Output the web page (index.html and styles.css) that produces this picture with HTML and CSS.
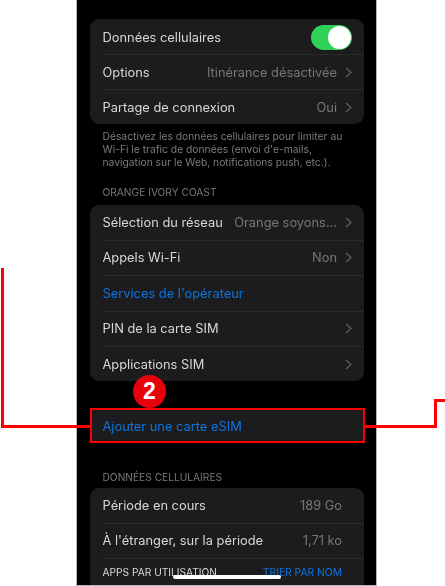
FILE: index.html
```html
<!doctype html>
<html>
<head>
<meta charset="utf-8">
<title>Données cellulaires</title>
<link rel="stylesheet" href="styles.css">
</head>

<body>
	<div class="phone">
		<ul class="group first">
			<li><span>Données cellulaires</span><i class="toggle"></i></li>
			<li><span>Options</span><em>Itinérance désactivée</em><svg class="chev" viewBox="0 0 7 11"><path d="M1 1l5 4.5-5 4.5"/></svg></li>
			<li><span>Partage de connexion</span><em>Oui</em><svg class="chev" viewBox="0 0 7 11"><path d="M1 1l5 4.5-5 4.5"/></svg></li>
		</ul>
		<p class="note">Désactivez les données cellulaires pour limiter au Wi-Fi le trafic de données (envoi d'e-mails, navigation sur le Web, notifications push, etc.).</p>
		<h4 class="title">ORANGE IVORY COAST</h4>
		<ul class="group">
			<li><span>Sélection du réseau</span><em>Orange soyons...</em><svg class="chev" viewBox="0 0 7 11"><path d="M1 1l5 4.5-5 4.5"/></svg></li>
			<li><span>Appels Wi-Fi</span><em>Non</em><svg class="chev" viewBox="0 0 7 11"><path d="M1 1l5 4.5-5 4.5"/></svg></li>
			<li class="low"><span class="link">Services de l'opérateur</span></li>
			<li class="low"><span>PIN de la carte SIM</span><svg class="chev" viewBox="0 0 7 11"><path d="M1 1l5 4.5-5 4.5"/></svg></li>
			<li class="lower"><span>Applications SIM</span><svg class="chev" viewBox="0 0 7 11"><path d="M1 1l5 4.5-5 4.5"/></svg></li>
		</ul>
		<div class="esim"><span class="link">Ajouter une carte eSIM</span></div>
		<h4 class="title usage">DONNÉES CELLULAIRES</h4>
		<ul class="group last">
			<li><span>Période en cours</span><em class="plain">189 Go</em></li>
			<li><span>À l'étranger, sur la période</span><em class="plain">1,71 ko</em></li>
			<li class="apps"><span>APPS PAR UTILISATION</span><b>TRIER PAR NOM</b></li>
		</ul>
		<div class="home"></div>
	</div>
	<div class="badge">2</div>
	<div class="line left-v"></div>
	<div class="line left-h"></div>
	<div class="line right-h"></div>
	<div class="line right-v"></div>
	<div class="line right-t"></div>
</body>
</html>
```

FILE: styles.css
```css
*{ margin:0; padding:0; list-style:none; box-sizing:border-box; }
html,body{ height:586px; overflow:hidden; }
body{ position:relative; background:#fff; font-family:"Inter","Liberation Sans",sans-serif; }
.phone{ position:relative; width:301px; height:586px; margin-left:76px; background:#000; padding:19px 12px 0 13px; border:1px solid #b5b5b5; border-width:0 1px 1px 1px; overflow:hidden; filter:blur(.45px); }
.group{ background:#1c1c1e; border-radius:9px; overflow:hidden; }
.group li{ display:flex; align-items:center; height:35.1px; padding-right:12px; margin-left:12.5px; border-top:1px solid #2a2a2c; font-size:12.85px; color:#d8d8da; }
.group li:first-child{ border-top:0; padding-top:1px; }
.title + .group li{ padding-bottom:1px; }
.title + .group li.low{ padding-bottom:0; }
.title + .group li.lower{ padding-bottom:0; padding-top:2px; }
.group span{ flex:1; white-space:nowrap; }
.group em{ font-style:normal; color:#77777b; white-space:nowrap; }
.group .link{ color:#0b74e2; }
.chev{ width:7px; height:11px; margin-left:8px; fill:none; stroke:#5c5c60; stroke-width:1.4; }
.toggle{ position:relative; display:block; width:41px; height:25px; border-radius:13px; background:#30d158; }
.toggle:after{ content:""; position:absolute; right:1px; top:1px; width:23px; height:23px; border-radius:50%; background:#fff; }
.note{ margin:6px 19px 0 12.5px; font-size:10.3px; line-height:13px; color:#7b7b7f; }
.title{ margin:17px 0 0 12.5px; font-size:10.2px; line-height:13px; font-weight:normal; color:#77777b; }
.title + .group{ margin-top:6px; }
.esim{ margin:27.5px -1px 0 0; height:35px; padding:2px 0 0 10.5px; background:#1c1c1e; border:2.5px solid #ff0000; display:flex; align-items:center; font-size:12.85px; }
.link{ color:#0b74e2; }
.title.usage{ margin-top:27.5px; }
.title.usage + .group{ margin-top:4.5px; }
.group.last{ border-radius:9px 9px 0 0; height:120px; }
.group .apps{ height:28px; padding-right:22px; font-size:10.2px; }
.group em.plain{ margin-right:10px; }
.apps b{ font-weight:normal; color:#0b74e2; font-size:10.3px; }
.home{ position:absolute; left:96px; top:575px; width:108px; height:4px; border-radius:2px; background:#fff; }
.badge{ position:absolute; left:133px; top:375px; width:33px; height:33px; border-radius:50%; background:#e8000d; color:#fff; font-size:23px; font-weight:bold; line-height:33px; text-align:center; font-family:"Liberation Sans",sans-serif; }
.line{ position:absolute; background:#ff0000; }
.left-v{ left:1px; top:268px; width:3px; height:160px; }
.left-h{ left:1px; top:425px; width:89px; height:3px; }
.right-h{ left:365px; top:425px; width:72px; height:3px; }
.right-v{ left:434px; top:399px; width:3px; height:29px; }
.right-t{ left:434px; top:399px; width:11px; height:3px; }
```
